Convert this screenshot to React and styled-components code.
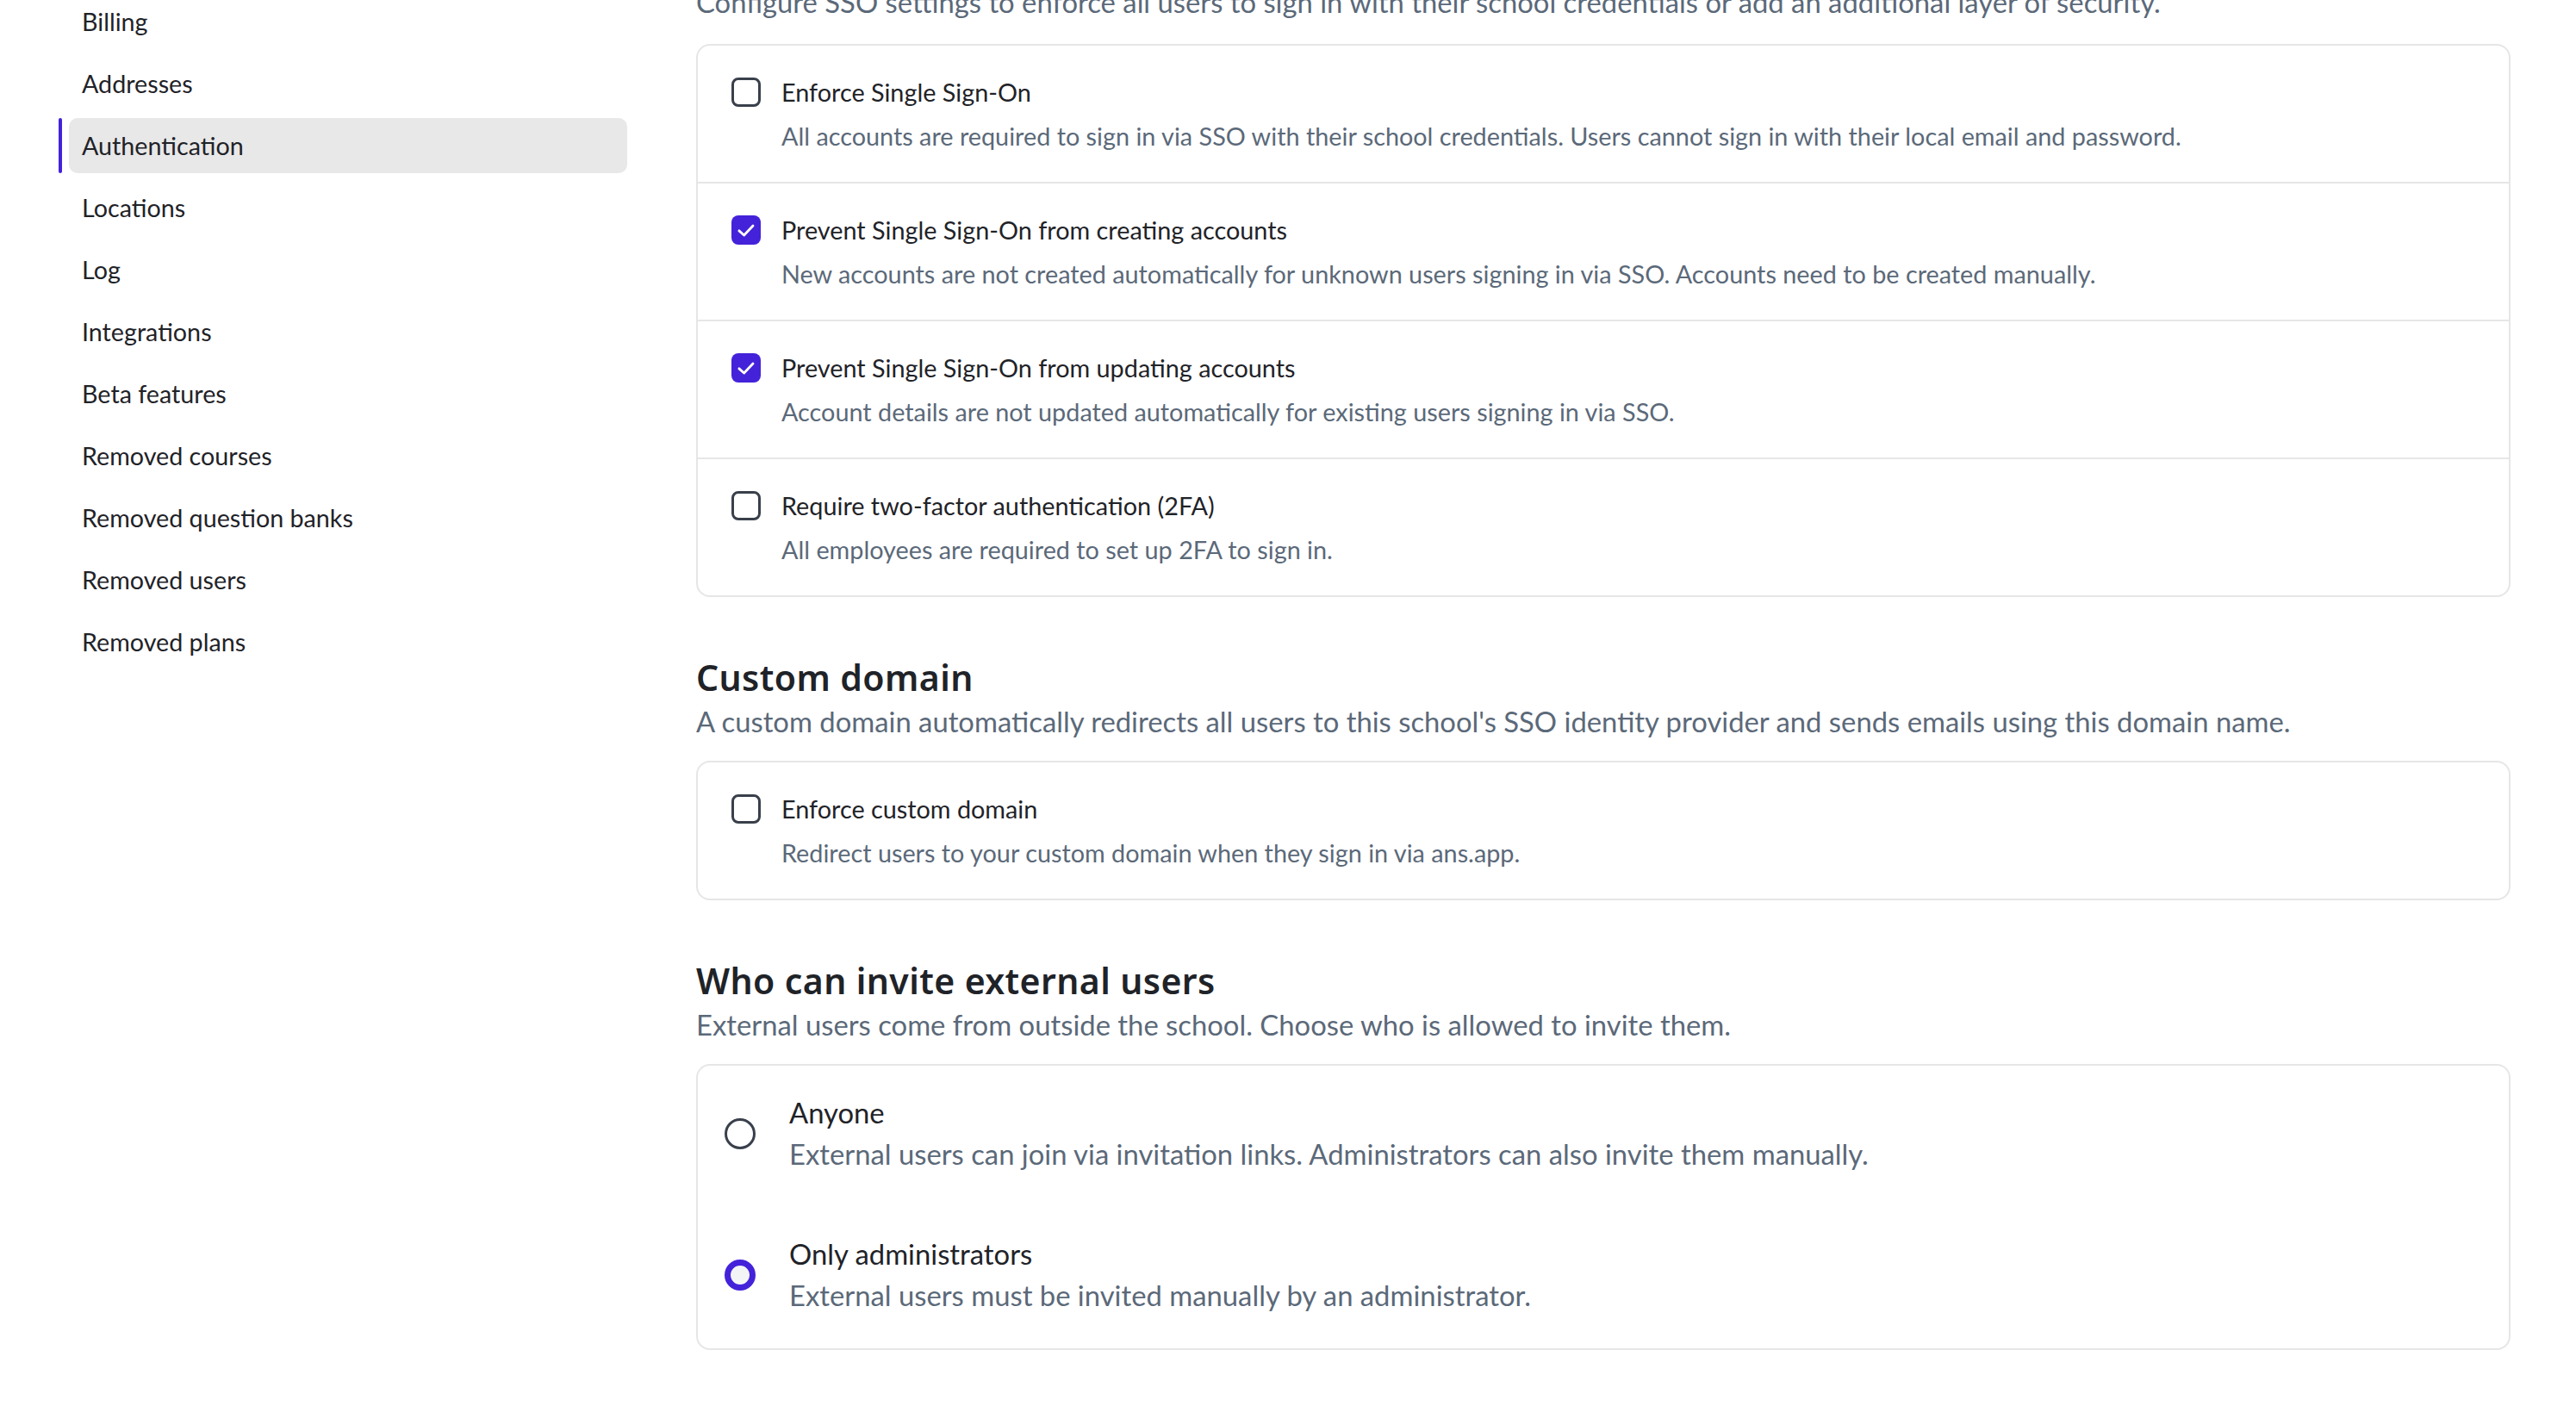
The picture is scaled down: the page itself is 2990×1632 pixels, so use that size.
import React from "react";
import styled, { createGlobalStyle } from "styled-components";

const GlobalStyle = createGlobalStyle`
  html, body { margin: 0; padding: 0; background: #ffffff; }
  body {
    font-family: "Lato", "Noto Sans", sans-serif;
    color: #1f2328;
    overflow: hidden;
    -webkit-font-smoothing: antialiased;
  }
  * { box-sizing: border-box; }
`;

const Page = styled.div`
  display: grid;
  grid-template-columns: 728px 1fr;
  column-gap: 80px;
  padding-right: 76px;
  margin-top: -17px;
  min-height: 1700px;
`;

const Sidebar = styled.nav`
  display: flex;
  flex-direction: column;
  gap: 8px;
  padding-top: 10px;
  padding-left: 68px;
`;

const NavRow = styled.div`
  display: flex;
  align-items: stretch;
  gap: 8px;
`;

const Indicator = styled.span`
  width: 4px;
  border-radius: 2px;
  background: ${(p) => (p.$active ? "#4521dc" : "transparent")};
`;

const NavLink = styled.a`
  flex: 1;
  display: flex;
  align-items: center;
  height: 64px;
  padding-left: 15px;
  border-radius: 10px;
  font-size: 28.7px;
  color: #1f2328;
  text-decoration: none;
  background: ${(p) => (p.$active ? "#e8e8e8" : "transparent")};
`;

const Main = styled.main`
  display: flex;
  flex-direction: column;
`;

const Lead = styled.p`
  margin: 0;
  font-size: 32.8px;
  line-height: 40px;
  color: #5b6979;
  white-space: nowrap;
`;

const Heading = styled.h2`
  margin: 69px 0 0;
  font-family: "Noto Sans", "Lato", sans-serif;
  font-weight: 600;
  font-size: 41px;
  line-height: 48px;
  letter-spacing: 0.4px;
  color: #1f2328;
`;

const SectionDesc = styled(Lead)`
  margin-top: 8px;
`;

const Card = styled.div`
  margin-top: ${(p) => p.$mt || 25}px;
  border: 2px solid #e6e6e6;
  border-radius: 16px;
  background: #fff;
  overflow: hidden;
`;

const CheckRow = styled.label`
  display: grid;
  grid-template-columns: 34px 1fr;
  column-gap: 24px;
  row-gap: 11px;
  align-items: center;
  padding: 34px 40px 33px 39px;
  & + & { border-top: 2px solid #e6e6e6; }
`;

const Box = styled.span`
  width: 34px;
  height: 34px;
  border-radius: 8px;
  display: flex;
  align-items: center;
  justify-content: center;
  border: ${(p) => (p.$checked ? "none" : "3.5px solid #39404b")};
  background: ${(p) => (p.$checked ? "#4422da" : "#fff")};
`;

const RowTitle = styled.span`
  font-size: 28.8px;
  line-height: 40px;
  color: #1f2328;
`;

const RowDesc = styled.span`
  grid-column: 2;
  font-size: 28.8px;
  line-height: 40px;
  color: #5b6979;
`;

const RadioRow = styled.label`
  display: flex;
  align-items: center;
  gap: 39px;
  padding: 31px 40px 37px 31px;
`;

const RadioDot = styled.span`
  flex: none;
  width: 36px;
  height: 36px;
  border-radius: 50%;
  border: ${(p) => (p.$checked ? "7px solid #4422da" : "3.5px solid #39404b")};
  background: ${(p) => (p.$checked ? "#f3f4f6" : "#fff")};
`;

const RadioText = styled.div`
  display: flex;
  flex-direction: column;
`;

const RadioTitle = styled.span`
  font-size: 32.8px;
  line-height: 48px;
  color: #1f2328;
`;

const RadioDesc = styled.span`
  font-size: 32.8px;
  line-height: 48px;
  color: #5b6979;
`;

const navItems = [
  "Billing",
  "Addresses",
  "Authentication",
  "Locations",
  "Log",
  "Integrations",
  "Beta features",
  "Removed courses",
  "Removed question banks",
  "Removed users",
  "Removed plans",
];

const ssoOptions = [
  {
    title: "Enforce Single Sign-On",
    desc: "All accounts are required to sign in via SSO with their school credentials. Users cannot sign in with their local email and password.",
    checked: false,
  },
  {
    title: "Prevent Single Sign-On from creating accounts",
    desc: "New accounts are not created automatically for unknown users signing in via SSO. Accounts need to be created manually.",
    checked: true,
  },
  {
    title: "Prevent Single Sign-On from updating accounts",
    desc: "Account details are not updated automatically for existing users signing in via SSO.",
    checked: true,
  },
  {
    title: "Require two-factor authentication (2FA)",
    desc: "All employees are required to set up 2FA to sign in.",
    checked: false,
  },
];

const radioOptions = [
  {
    title: "Anyone",
    desc: "External users can join via invitation links. Administrators can also invite them manually.",
    checked: false,
  },
  {
    title: "Only administrators",
    desc: "External users must be invited manually by an administrator.",
    checked: true,
  },
];

function Checkbox({ checked }) {
  return (
    <Box $checked={checked}>
      {checked && (
        <svg width="26" height="26" viewBox="0 0 24 24" fill="none">
          <polyline
            points="4.5 12.8 9.8 17.6 19.4 7.4"
            stroke="#fff"
            strokeWidth="2.6"
            strokeLinecap="round"
            strokeLinejoin="round"
          />
        </svg>
      )}
    </Box>
  );
}

function CheckOption({ title, desc, checked }) {
  return (
    <CheckRow>
      <Checkbox checked={checked} />
      <RowTitle>{title}</RowTitle>
      <RowDesc>{desc}</RowDesc>
    </CheckRow>
  );
}

export default function App() {
  return (
    <>
      <GlobalStyle />
      <Page>
        <Sidebar>
          {navItems.map((item) => {
            const active = item === "Authentication";
            return (
              <NavRow key={item}>
                <Indicator $active={active} />
                <NavLink $active={active}>{item}</NavLink>
              </NavRow>
            );
          })}
        </Sidebar>
        <Main>
          <Lead>
            Configure SSO settings to enforce all users to sign in with their school credentials or add an additional layer of security.
          </Lead>
          <Card $mt={28}>
            {ssoOptions.map((o) => (
              <CheckOption key={o.title} {...o} />
            ))}
          </Card>

          <Heading>Custom domain</Heading>
          <SectionDesc>
            A custom domain automatically redirects all users to this school's SSO identity provider and sends emails using this domain name.
          </SectionDesc>
          <Card>
            <CheckOption
              title="Enforce custom domain"
              desc="Redirect users to your custom domain when they sign in via ans.app."
              checked={false}
            />
          </Card>

          <Heading>Who can invite external users</Heading>
          <SectionDesc>
            External users come from outside the school. Choose who is allowed to invite them.
          </SectionDesc>
          <Card $mt={25}>
            {radioOptions.map((o) => (
              <RadioRow key={o.title}>
                <RadioDot $checked={o.checked} />
                <RadioText>
                  <RadioTitle>{o.title}</RadioTitle>
                  <RadioDesc>{o.desc}</RadioDesc>
                </RadioText>
              </RadioRow>
            ))}
          </Card>
        </Main>
      </Page>
    </>
  );
}
